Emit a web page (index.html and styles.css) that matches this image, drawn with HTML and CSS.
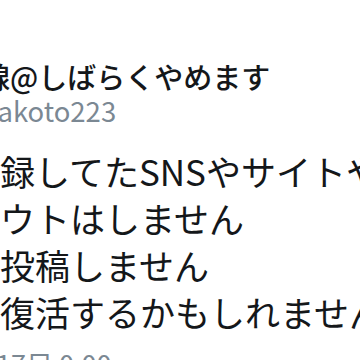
FILE: index.html
```html
<!DOCTYPE html>
<html lang="ja">
<head>
<meta charset="utf-8">
<link rel="stylesheet" href="styles.css">
</head>
<body>
<div class="tweet">
  <div class="header">
    <div class="name">線@しばらくやめます</div>
    <div class="handle">@makoto223</div>
  </div>
  <div class="text">
    <p class="line">録してたSNSやサイトや</p>
    <p class="line">ウトはしません</p>
    <p class="line">投稿しません</p>
    <p class="line">復活するかもしれません</p>
  </div>
  <div class="time">17日 0:00</div>
</div>
</body>
</html>
```
FILE: styles.css
```css
html, body {
  margin: 0;
  padding: 0;
  background: #ffffff;
}
body {
  width: 360px;
  height: 360px;
  overflow: hidden;
  font-family: "Noto Sans CJK JP", sans-serif;
  color: #14171a;
}
.tweet {
  padding-top: 59px;
}
.header {
  display: flex;
  flex-direction: column;
}
.name {
  font-size: 29px;
  line-height: 34px;
  font-weight: 500;
  white-space: nowrap;
  margin-left: -19px;
}
.handle {
  font-size: 27.5px;
  line-height: 30px;
  color: #7b8893;
  white-space: nowrap;
  margin-top: 2px;
  margin-left: -54px;
}
.text {
  margin-top: 22px;
}
.line {
  margin: 0;
  font-size: 35px;
  line-height: 47px;
  white-space: nowrap;
}
.time {
  margin-top: 14px;
  font-size: 27px;
  line-height: 30px;
  color: #7b8893;
  white-space: nowrap;
  margin-left: -4px;
}
```
